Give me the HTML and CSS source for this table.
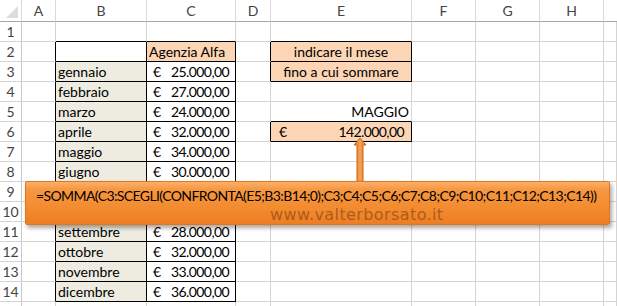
FILE: index.html
```html
<!DOCTYPE html>
<html lang="it">
<head>
<meta charset="utf-8">
<title>SOMMA con SCEGLI e CONFRONTA</title>
<link rel="stylesheet" href="styles.css">
</head>
<body>
<div class="sheet">
  <div class="grid">
    <!-- column headers -->
    <div class="corner"><span class="tri"></span></div>
    <div class="ch">A</div><div class="ch">B</div><div class="ch">C</div><div class="ch">D</div>
    <div class="ch">E</div><div class="ch">F</div><div class="ch">G</div><div class="ch">H</div><div class="ch last"></div>

    <!-- 1 -->
    <div class="c rh">1</div><div class="c"></div><div class="c kb"></div><div class="c kb"></div><div class="c"></div>
    <div class="c kb"></div><div class="c"></div><div class="c"></div><div class="c"></div><div class="c"></div>

    <!-- 2 -->
    <div class="c rh">2</div><div class="c kr"></div><div class="c kr kb"></div><div class="c kr kb peach">Agenzia Alfa</div><div class="c kr"></div>
    <div class="c kr kb peach center">indicare il mese</div><div class="c"></div><div class="c"></div><div class="c"></div><div class="c"></div>

    <!-- 3 -->
    <div class="c rh">3</div><div class="c kr"></div><div class="c kr kb tan">gennaio</div><div class="c kr kb acc"><span>€</span><span class="num">25.000,00</span></div><div class="c kr"></div>
    <div class="c kr kb peach center">fino a cui sommare</div><div class="c"></div><div class="c"></div><div class="c"></div><div class="c"></div>

    <!-- 4 -->
    <div class="c rh">4</div><div class="c kr"></div><div class="c kr kb tan">febbraio</div><div class="c kr kb acc"><span>€</span><span class="num">27.000,00</span></div><div class="c"></div>
    <div class="c"></div><div class="c"></div><div class="c"></div><div class="c"></div><div class="c"></div>

    <!-- 5 -->
    <div class="c rh">5</div><div class="c kr"></div><div class="c kr kb tan">marzo</div><div class="c kr kb acc"><span>€</span><span class="num">24.000,00</span></div><div class="c"></div>
    <div class="c kb right">MAGGIO</div><div class="c"></div><div class="c"></div><div class="c"></div><div class="c"></div>

    <!-- 6 -->
    <div class="c rh">6</div><div class="c kr"></div><div class="c kr kb tan">aprile</div><div class="c kr kb acc"><span>€</span><span class="num">32.000,00</span></div><div class="c kr"></div>
    <div class="c kr kb peach acc total"><span>€</span><span class="num">142.000,00</span></div><div class="c"></div><div class="c"></div><div class="c"></div><div class="c"></div>

    <!-- 7 -->
    <div class="c rh">7</div><div class="c kr"></div><div class="c kr kb tan">maggio</div><div class="c kr kb acc"><span>€</span><span class="num">34.000,00</span></div><div class="c"></div>
    <div class="c"></div><div class="c"></div><div class="c"></div><div class="c"></div><div class="c"></div>

    <!-- 8 -->
    <div class="c rh">8</div><div class="c kr"></div><div class="c kr kb tan">giugno</div><div class="c kr kb acc"><span>€</span><span class="num">30.000,00</span></div><div class="c"></div>
    <div class="c"></div><div class="c"></div><div class="c"></div><div class="c"></div><div class="c"></div>

    <!-- 9 (under the callout) -->
    <div class="c rh">9</div><div class="c kr"></div><div class="c kr kb tan"></div><div class="c kr kb acc"></div><div class="c"></div>
    <div class="c"></div><div class="c"></div><div class="c"></div><div class="c"></div><div class="c"></div>

    <!-- 10 (under the callout) -->
    <div class="c rh">10</div><div class="c kr"></div><div class="c kr kb tan"></div><div class="c kr kb acc"></div><div class="c"></div>
    <div class="c"></div><div class="c"></div><div class="c"></div><div class="c"></div><div class="c"></div>

    <!-- 11 -->
    <div class="c rh">11</div><div class="c kr"></div><div class="c kr kb tan">settembre</div><div class="c kr kb acc"><span>€</span><span class="num">28.000,00</span></div><div class="c"></div>
    <div class="c"></div><div class="c"></div><div class="c"></div><div class="c"></div><div class="c"></div>

    <!-- 12 -->
    <div class="c rh">12</div><div class="c kr"></div><div class="c kr kb tan">ottobre</div><div class="c kr kb acc"><span>€</span><span class="num">32.000,00</span></div><div class="c"></div>
    <div class="c"></div><div class="c"></div><div class="c"></div><div class="c"></div><div class="c"></div>

    <!-- 13 -->
    <div class="c rh">13</div><div class="c kr"></div><div class="c kr kb tan">novembre</div><div class="c kr kb acc"><span>€</span><span class="num">33.000,00</span></div><div class="c"></div>
    <div class="c"></div><div class="c"></div><div class="c"></div><div class="c"></div><div class="c"></div>

    <!-- 14 -->
    <div class="c rh">14</div><div class="c kr"></div><div class="c kr kb tan">dicembre</div><div class="c kr kb acc"><span>€</span><span class="num">36.000,00</span></div><div class="c"></div>
    <div class="c"></div><div class="c"></div><div class="c"></div><div class="c"></div><div class="c"></div>

    <!-- 15 (only its top edge shows) -->
    <div class="c rh"></div><div class="c"></div><div class="c"></div><div class="c"></div><div class="c"></div>
    <div class="c"></div><div class="c"></div><div class="c"></div><div class="c"></div><div class="c"></div>
  </div>

  <!-- arrow from the callout up to the total cell -->
  <svg class="arrow" width="16" height="46" viewBox="0 0 16 46" aria-hidden="true">
    <defs>
      <linearGradient id="shaft" x1="0" y1="0" x2="1" y2="0">
        <stop offset="0" stop-color="#d9701c"/>
        <stop offset="0.5" stop-color="#f9a356"/>
        <stop offset="1" stop-color="#d9701c"/>
      </linearGradient>
    </defs>
    <polygon points="8,1 14,8 11,8 11,46 5,46 5,8 2,8" fill="url(#shaft)" stroke="#c8661b" stroke-width="1"/>
  </svg>

  <!-- formula callout -->
  <div class="callout">
    <div class="formula">=SOMMA(C3:SCEGLI(CONFRONTA(E5;B3:B14;0);C3;C4;C5;C6;C7;C8;C9;C10;C11;C12;C13;C14))</div>
    <div class="site">www.valterborsato.it</div>
  </div>
</div>
</body>
</html>
```

FILE: styles.css
```css
html, body {
  margin: 0;
  padding: 0;
  background: #ffffff;
}

.sheet {
  position: relative;
  width: 617px;
  height: 306px;
  overflow: hidden;
  font-family: Lato, "Noto Sans", sans-serif;
  font-size: 14px;
  color: #000;
}

.grid {
  display: grid;
  grid-template-columns: 22px 34px 91px 89px 35px 141px 64px 64px 64px 1fr;
  grid-template-rows: 22px;
  grid-auto-rows: 20px;
}

/* headers */
.corner,
.ch {
  box-sizing: border-box;
  border-right: 1px solid #dadada;
  border-bottom: 1px solid #a6a6a6;
  background: #fff;
}

.corner {
  position: relative;
}

.tri {
  position: absolute;
  right: 3px;
  bottom: 3px;
  width: 0;
  height: 0;
  border-left: 12px solid transparent;
  border-bottom: 12px solid #dcdcdc;
}

.ch {
  text-align: center;
  line-height: 21px;
  color: #444;
}

.ch.last {
  border-right: none;
}

/* body cells */
.c {
  box-sizing: border-box;
  border-right: 1px solid #d4d4d4;
  border-bottom: 1px solid #d4d4d4;
  padding: 0 2px;
  line-height: 19px;
  white-space: nowrap;
  overflow: hidden;
}

.rh {
  text-align: center;
  color: #444;
  padding: 0;
  border-right-color: #c8c8c8;
}

.kr { border-right-color: #000; }
.kb { border-bottom-color: #000; }

.tan { background: #eeece1; }
.peach { background: #fcd5b4; }

.center { text-align: center; }
.right { text-align: right; }

.acc {
  display: flex;
  justify-content: space-between;
  padding: 0 6px 0 6px;
}

.acc.total {
  padding: 0 7px 0 8px;
}

.num {
  letter-spacing: -0.6px;
}

/* callout */
.arrow {
  position: absolute;
  left: 352px;
  top: 137px;
}

.callout {
  position: absolute;
  left: 25px;
  top: 181px;
  width: 585px;
  height: 44px;
  box-sizing: border-box;
  border: 1px solid #e2761f;
  border-radius: 2px;
  background: linear-gradient(#fbb06b 0%, #f7973f 18%, #f38c30 60%, #ec7d22 100%);
  box-shadow: 2px 3px 4px rgba(0, 0, 0, 0.35);
}

.formula {
  padding: 5px 0 0 10px;
  line-height: 18px;
  font-size: 14px;
  letter-spacing: -0.6px;
  white-space: nowrap;
}

.site {
  padding-left: 244px;
  line-height: 20px;
  font-family: "DejaVu Sans", Verdana, sans-serif;
  font-size: 16px;
  letter-spacing: 0.4px;
  color: rgba(105, 50, 15, 0.52);
  white-space: nowrap;
}
```
